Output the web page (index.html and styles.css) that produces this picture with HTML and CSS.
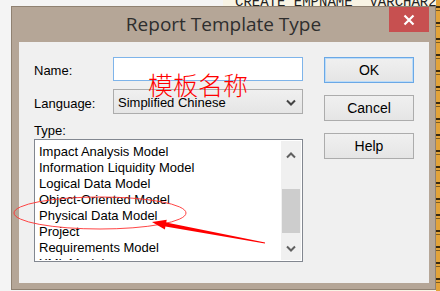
FILE: index.html
```html
<!DOCTYPE html>
<html lang="en">
<head>
    <meta charset="UTF-8">
    <meta name="viewport" content="width=device-width, initial-scale=1.0">
    <title>Report Template Type</title>
    <link rel="stylesheet" href="styles.css">
</head>
<body>

<div class="screen">

    <!-- SQL editor behind the dialog -->
    <div class="editor">
        <div class="code-line">CREATE EMPNAME  VARCHAR2</div>
    </div>

    <!-- Dialog window -->
    <div class="dialog">
        <div class="titlebar">
            <span class="title">Report Template Type</span>
            <span class="close-btn">
                <svg width="12" height="12" viewBox="0 0 12 12">
                    <path d="M1.5 1.5 L10.5 10.5 M10.5 1.5 L1.5 10.5" stroke="#fff" stroke-width="2.2"/>
                </svg>
            </span>
        </div>

        <div class="client">
            <div class="fields">
                <div class="row">
                    <label class="lbl">Name:</label>
                    <div class="textbox"></div>
                </div>
                <div class="row row-combo">
                    <label class="lbl">Language:</label>
                    <div class="combo">
                        <span>Simplified Chinese</span>
                        <svg class="chevron" width="10" height="7" viewBox="0 0 10 7">
                            <path d="M1 1.5 L5 5.5 L9 1.5" fill="none" stroke="#444" stroke-width="2"/>
                        </svg>
                    </div>
                </div>
                <div class="type-label">Type:</div>
                <div class="listbox">
                    <ul class="items">
                        <li>Impact Analysis Model</li>
                        <li>Information Liquidity Model</li>
                        <li>Logical Data Model</li>
                        <li>Object-Oriented Model</li>
                        <li>Physical Data Model</li>
                        <li>Project</li>
                        <li>Requirements Model</li>
                        <li>XML Model</li>
                    </ul>
                    <div class="scrollbar">
                        <div class="sb-btn sb-up">
                            <svg width="10" height="7" viewBox="0 0 10 7">
                                <path d="M1 5.5 L5 1.5 L9 5.5" fill="none" stroke="#606060" stroke-width="2"/>
                            </svg>
                        </div>
                        <div class="sb-track"><div class="sb-thumb"></div></div>
                        <div class="sb-btn sb-down">
                            <svg width="10" height="7" viewBox="0 0 10 7">
                                <path d="M1 1.5 L5 5.5 L9 1.5" fill="none" stroke="#606060" stroke-width="2"/>
                            </svg>
                        </div>
                    </div>
                </div>
            </div>

            <div class="actions">
                <button class="btn btn-default">OK</button>
                <button class="btn">Cancel</button>
                <button class="btn">Help</button>
            </div>
        </div>
    </div>

    <!-- Red annotations drawn on top of the screenshot -->
    <div class="note">模板名称</div>
    <svg class="markup" width="440" height="291" viewBox="0 0 440 291">
        <ellipse cx="100" cy="213" rx="86" ry="16" fill="none" stroke="#ff3030" stroke-width="0.9"/>
        <polygon fill="#ff0000"
                 points="152,222 166.7,219.7 166.2,222.6 265.1,242.5 264.9,243.5 165.4,226.6 164.9,229.5"/>
    </svg>

</div>

</body>
</html>
```

FILE: styles.css
```css
/* General */
body {
    margin: 0;
    background: #f3f3f3;
    font-family: 'Liberation Sans', Arial, sans-serif;
}

.screen {
    position: relative;
    width: 440px;
    height: 291px;
    overflow: hidden;
    background: #f4f4f4;
}

/* Editor peeking out behind the dialog */
.editor {
    position: absolute;
    left: 223px;
    top: 0;
    right: 0;
    bottom: 0;
    background:
        repeating-linear-gradient(180deg, #e2a33a 0 6px, #3a2a10 6px 8px, #e2a33a 8px 10px, #7a5a20 10px 11px, #e2a33a 11px 16px) 213px 0 / 4px 100% no-repeat,
        #f8f3e4;
}
.code-line {
    position: absolute;
    left: 12px;
    top: -6px;
    font-family: 'Liberation Mono', monospace;
    font-size: 14px;
    line-height: 16px;
    color: #222;
    white-space: pre;
}

/* Dialog frame */
.dialog {
    position: absolute;
    left: 11px;
    top: 6px;
    width: 425px;
    height: 284px;
    box-sizing: border-box;
    border: 1px solid #8f8171;
    background: #b5a697;
    display: flex;
    flex-direction: column;
}

.titlebar {
    position: relative;
    height: 35px;
    text-align: center;
}
.title {
    font-family: 'Open Sans', sans-serif;
    font-size: 19px;
    line-height: 35px;
    color: #2e2e2e;
}
.close-btn {
    position: absolute;
    right: 6px;
    top: 0;
    width: 40px;
    height: 25px;
    background: #c75050;
    display: flex;
    align-items: center;
    justify-content: center;
}

/* Client area */
.client {
    margin: 0 6px 6px 7px;
    height: 241px;
    background: #f0f0f0;
    display: flex;
    padding: 15px 15px 0 15px;
    box-sizing: border-box;
    font-size: 13px;
    color: #000;
}

.fields {
    width: 269px;
    display: flex;
    flex-direction: column;
}

.row {
    display: flex;
    align-items: center;
    height: 24px;
    margin-bottom: 8px;
}
.row-combo {
    height: 25px;
    margin-bottom: 0;
}
.lbl {
    width: 79px;
    padding-top: 3px;
}

.textbox {
    width: 190px;
    height: 24px;
    box-sizing: border-box;
    border: 1px solid #7eb4ea;
    background: #fff;
}

.combo {
    width: 190px;
    height: 25px;
    box-sizing: border-box;
    border: 1px solid #acacac;
    background: linear-gradient(#f0f0f0, #e5e5e5);
    display: flex;
    align-items: center;
    justify-content: space-between;
    padding: 1px 6px 0 4px;
}

.type-label {
    height: 25px;
    box-sizing: border-box;
    padding-top: 9px;
    line-height: 16px;
}

/* List box */
.listbox {
    height: 123px;
    box-sizing: border-box;
    border: 1px solid #828790;
    background: #fff;
    padding: 1px;
    display: flex;
}
.items {
    flex: 1;
    list-style: none;
    margin: 0;
    padding: 3px 0 0 3px;
    line-height: 16px;
    overflow: hidden;
}

.scrollbar {
    width: 20px;
    background: #f0f0f0;
    display: flex;
    flex-direction: column;
}
.sb-btn {
    display: flex;
    align-items: center;
    justify-content: center;
}
.sb-up { height: 29px; }
.sb-down { height: 23px; }
.sb-track {
    flex: 1;
    padding-top: 19px;
}
.sb-thumb {
    height: 44px;
    margin: 0 1px;
    background: #cdcdcd;
}

/* Buttons */
.actions {
    margin-left: 21px;
    width: 90px;
    display: flex;
    flex-direction: column;
    gap: 12px;
}
.btn {
    width: 90px;
    height: 26px;
    border: 1px solid #acacac;
    background: linear-gradient(#f0f0f0, #e5e5e5);
    font-family: 'Liberation Sans', Arial, sans-serif;
    font-size: 14px;
    color: #000;
    padding: 0;
}
.btn-default {
    border-color: #6aa8e6;
    box-shadow: inset 0 0 0 1px #bcdcf8;
}

/* Annotations */
.note {
    position: absolute;
    left: 148px;
    top: 70px;
    font-family: 'Noto Sans CJK SC', sans-serif;
    font-size: 25px;
    line-height: 28px;
    font-weight: 300;
    color: #ff0000;
}
.markup {
    position: absolute;
    left: 0;
    top: 0;
    pointer-events: none;
}
```
